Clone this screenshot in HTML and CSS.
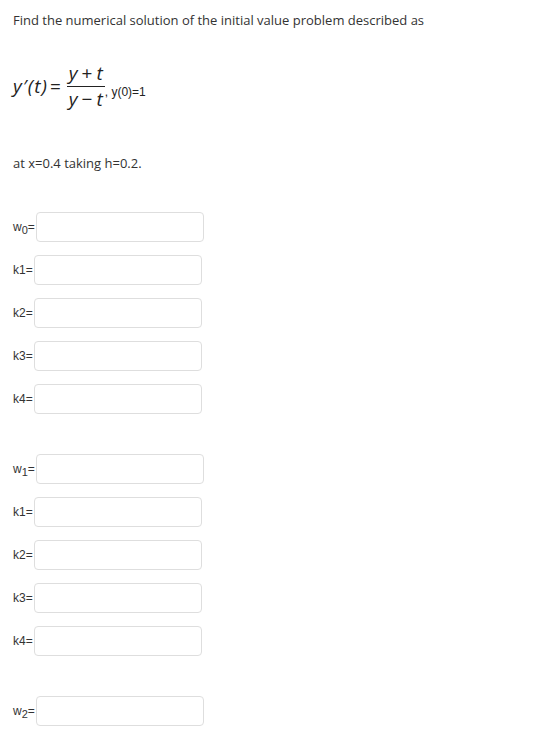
FILE: index.html
```html
<!DOCTYPE html>
<html>
<head>
<meta charset="utf-8">
<link rel="stylesheet" href="styles.css">
</head>
<body>
<div class="page">
  <p class="intro">Find the numerical solution of the initial value problem described as</p>
  <div class="eq">
    <span class="math lhs">y′(t)</span><span class="math eqsign">=</span>
    <span class="frac">
      <span class="math num">y<span class="op">+</span>t</span>
      <span class="math den">y<span class="op">−</span>t</span>
    </span>
    <span class="cond">, y(0)=1</span>
  </div>
  <p class="at">at x=0.4 taking h=0.2.</p>
  <div class="group">
    <div class="row"><span class="lbl">w<sub>0</sub>=</span><input class="box" type="text"></div>
    <div class="row"><span class="lbl">k1=</span><input class="box" type="text"></div>
    <div class="row"><span class="lbl">k2=</span><input class="box" type="text"></div>
    <div class="row"><span class="lbl">k3=</span><input class="box" type="text"></div>
    <div class="row"><span class="lbl">k4=</span><input class="box" type="text"></div>
  </div>
  <div class="group">
    <div class="row"><span class="lbl">w<sub>1</sub>=</span><input class="box" type="text"></div>
    <div class="row"><span class="lbl">k1=</span><input class="box" type="text"></div>
    <div class="row"><span class="lbl">k2=</span><input class="box" type="text"></div>
    <div class="row"><span class="lbl">k3=</span><input class="box" type="text"></div>
    <div class="row"><span class="lbl">k4=</span><input class="box" type="text"></div>
  </div>
  <div class="group">
    <div class="row"><span class="lbl">w<sub>2</sub>=</span><input class="box" type="text"></div>
  </div>
</div>
</body>
</html>
```
FILE: styles.css
```css
html, body {
  margin: 0;
  padding: 0;
  background: #ffffff;
}
.page {
  padding: 11px 13px 0 13px;
  font-family: "Open Sans", sans-serif;
  color: #333333;
}
.intro {
  margin: 0;
  font-size: 13px;
  line-height: 18px;
}
.eq {
  display: flex;
  align-items: center;
  margin-top: 32px;
  height: 50px;
}
.math {
  font-family: "Open Sans", sans-serif;
  font-style: italic;
  font-size: 19px;
  color: #222222;
}
.lhs {
  letter-spacing: 1px;
}
.eqsign {
  font-style: normal;
  margin: 0 4px 0 2px;
}
.op {
  font-style: normal;
  margin: 0 4px;
}
.frac {
  display: inline-flex;
  flex-direction: column;
  align-items: center;
  margin-left: 2px;
}
.num {
  line-height: 22px;
  padding: 0 2px 2px;
  border-bottom: 1px solid #222222;
}
.den {
  line-height: 23px;
  padding-top: 1px;
}
.cond {
  font-family: "Liberation Sans", Arial, sans-serif;
  font-size: 12px;
  line-height: 14px;
  color: #222222;
  margin-top: 12px;
}
.at {
  margin: 43px 0 0 0;
  font-size: 13px;
  line-height: 18px;
}
.group {
  margin-top: 40px;
}
.group + .group {
  margin-top: 40px;
}
.row {
  display: flex;
  align-items: center;
  height: 30px;
  margin-bottom: 13px;
}
.lbl {
  font-family: "Liberation Sans", Arial, sans-serif;
  font-size: 12px;
  color: #333333;
  white-space: nowrap;
}
.lbl sub {
  font-size: 11px;
  vertical-align: -3px;
  line-height: 0;
}
.box {
  box-sizing: border-box;
  width: 168px;
  height: 30px;
  margin: 0 0 0 1px;
  border: 1px solid #dedede;
  border-radius: 4px;
  background: #fff;
  padding: 0;
}
```
